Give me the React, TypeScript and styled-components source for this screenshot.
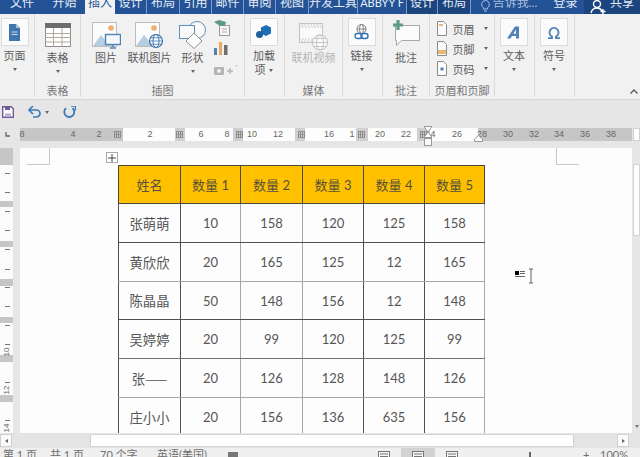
import React from 'react';
import styled, { createGlobalStyle } from 'styled-components';

const LATIN_FIRST = `Lato, 'Noto Sans CJK SC', sans-serif`;
const CJK_FIRST = `'Noto Sans CJK SC', Lato, sans-serif`;

const GlobalStyle = createGlobalStyle`
  html, body { margin: 0; padding: 0; background: #e6e6e6; }
  body { font-family: ${LATIN_FIRST}; overflow: hidden; }
`;

const Window = styled.div`
  width: 640px;
  height: 457px;
  overflow: hidden;
  display: flex;
  flex-direction: column;
  background: #e6e6e6;
`;

/* title tabs, cropped at the top in the picture */
const TabBar = styled.div`
  height: 14px;
  flex: none;
  display: flex;
  overflow: hidden;
  background: #235396;
`;

const Tab = styled.div<{ $w: number; $active?: boolean; $dark?: boolean; $sep?: boolean; $dim?: boolean; $small?: boolean }>`
  width: ${(p) => p.$w}px;
  flex: none;
  height: 14px;
  box-sizing: border-box;
  display: flex;
  justify-content: center;
  gap: 3px;
  font-size: ${(p) => (p.$small ? 11 : 12)}px;
  line-height: 14px;
  color: ${(p) => (p.$active ? '#2b579a' : p.$dim ? '#a9bfdc' : '#e8eef6')};
  background: ${(p) => (p.$active ? '#f1f1f1' : p.$dark ? '#1b457f' : 'transparent')};
  border-right: ${(p) => (p.$sep ? '1px solid #7f9cc4' : 'none')};
  & > span {
    margin-top: -4px;
    white-space: nowrap;
  }
`;

const Ribbon = styled.div`
  height: 85px;
  flex: none;
  display: flex;
  position: relative;
  background: #f1f1f1;
  border-bottom: 1px solid #d6d6d6;
`;

const Group = styled.div<{ $w: number }>`
  width: ${(p) => p.$w}px;
  height: 83px;
  flex: none;
  box-sizing: border-box;
  display: flex;
  flex-direction: column;
  border-right: 1px solid #dadada;
`;

const GroupBody = styled.div<{ $pr?: number }>`
  height: 71px;
  flex: none;
  box-sizing: border-box;
  padding-right: ${(p) => p.$pr ?? 0}px;
  display: flex;
  justify-content: center;
`;

const GroupLabel = styled.div`
  height: 12px;
  font-size: 11px;
  line-height: 12px;
  text-align: center;
  color: #777;
  white-space: nowrap;
`;

const Tool = styled.div<{ $w?: number }>`
  width: ${(p) => (p.$w ? `${p.$w}px` : 'auto')};
  flex: ${(p) => (p.$w ? 'none' : '1')};
  display: flex;
  flex-direction: column;
  align-items: center;
  padding-top: 4px;
`;

const Slot = styled.div<{ $top?: number }>`
  height: 30px;
  box-sizing: border-box;
  padding-top: ${(p) => p.$top ?? 0}px;
  display: flex;
  align-items: flex-start;
  justify-content: center;
`;

const IconBox = styled.div`
  width: 28px;
  height: 28px;
  box-sizing: border-box;
  display: flex;
  align-items: center;
  justify-content: center;
  background: #fbfbfb;
  border: 1px solid #dcdcdc;
`;

const ToolLabel = styled.div<{ $low?: boolean; $off?: boolean }>`
  margin-top: ${(p) => (p.$low ? 3 : 1)}px;
  font-size: 11px;
  line-height: 13px;
  color: ${(p) => (p.$off ? '#b4b4b4' : '#5c5c5c')};
  white-space: nowrap;
`;

const Caret = styled.i`
  display: inline-block;
  margin-top: 6px;
  width: 0;
  height: 0;
  border-left: 2.5px solid transparent;
  border-right: 2.5px solid transparent;
  border-top: 3px solid #666;
`;

const LabelCaret = styled(Caret)`
  margin: 0 0 2px 1px;
  vertical-align: middle;
`;

const MiniStack = styled.div`
  display: flex;
  flex-direction: column;
  align-items: flex-start;
  padding-top: 6px;
  gap: 6px;
  margin-left: 3px;
`;

const CameraSvg = styled.svg`
  margin-top: 4px;
`;

const ListStack = styled.div`
  display: flex;
  flex-direction: column;
  gap: 3px;
  padding-top: 6px;
`;

const ListRow = styled.div`
  height: 17px;
  display: flex;
  align-items: center;
  gap: 6px;
  font-size: 11px;
  color: #5c5c5c;
  & > i {
    margin-top: 0;
    margin-left: 3px;
  }
`;

const Collapse = styled.svg`
  position: absolute;
  right: 2px;
  bottom: 5px;
`;

const Qat = styled.div`
  height: 28px;
  flex: none;
  display: flex;
  align-items: center;
  padding: 0 0 4px 2px;
  box-sizing: border-box;
  & > i {
    margin: 0 0 0 4px;
  }
`;

const QatGap = styled.span<{ $w: number }>`
  width: ${(p) => p.$w}px;
  flex: none;
`;

const RulerRow = styled.div`
  height: 13px;
  flex: none;
  display: flex;
`;

const RulerCorner = styled.div`
  width: 20px;
  flex: none;
  display: flex;
  align-items: center;
  padding-left: 5px;
  box-sizing: border-box;
`;

const HRuler = styled.div`
  position: relative;
  width: 612px;
  display: flex;
  font-size: 9px;
  color: #666;
`;

const RulerPart = styled.div<{ $w: number; $on?: boolean; $gap?: boolean }>`
  width: ${(p) => p.$w}px;
  flex: none;
  background: ${(p) => (p.$on ? '#fdfdfd' : p.$gap ? '#cfcfcf' : '#c6c6c6')};
`;

const RulerMark = styled.span<{ $x: number }>`
  position: absolute;
  top: 0;
  left: ${(p) => p.$x - 20}px;
  width: 16px;
  margin-left: -8px;
  text-align: center;
  line-height: 13px;
  font-family: 'Liberation Sans', sans-serif;
`;

const GridMark = styled.span<{ $x: number }>`
  position: absolute;
  top: 3px;
  left: ${(p) => p.$x - 23}px;
  width: 7px;
  height: 7px;
  background: repeating-linear-gradient(90deg, #8a8a8a 0 1px, transparent 1px 2px),
    repeating-linear-gradient(0deg, #999 0 1px, transparent 1px 3px);
`;

const IndentMarker = styled.svg`
  position: absolute;
  top: -2px;
  left: 403px;
`;

const TabMarker = styled.svg`
  position: absolute;
  top: 7px;
  left: 454px;
`;

const ScrollUp = styled.div`
  width: 7px;
  flex: none;
  margin-left: 1px;
  background: #fff;
  border: 1px solid #cfcfcf;
  box-sizing: border-box;
`;

const Body = styled.div`
  height: 292px;
  flex: none;
  display: flex;
`;

const VRuler = styled.div`
  width: 13px;
  flex: none;
  margin: 7px 7px 0 0;
  position: relative;
  overflow: hidden;
  background: #fbfbfb;
`;

/* y values are window pixels, the ruler track starts at 148 */
const VBlock = styled.div<{ $y: number; $h: number }>`
  position: absolute;
  left: 0;
  right: 0;
  top: ${(p) => p.$y - 148}px;
  height: ${(p) => p.$h}px;
  background: #c6c6c6;
`;

const VTick = styled.div<{ $y: number }>`
  position: absolute;
  left: 5px;
  width: 5px;
  height: 1px;
  top: ${(p) => p.$y - 148}px;
  background: #777;
`;

const VNumber = styled.span<{ $y: number }>`
  position: absolute;
  left: 0;
  width: 13px;
  text-align: center;
  top: ${(p) => p.$y - 154}px;
  line-height: 12px;
  font-size: 8px;
  color: #666;
  font-family: 'Liberation Sans', sans-serif;
  transform: rotate(-90deg);
`;

const Page = styled.div`
  position: relative;
  width: 612px;
  flex: none;
  margin-top: 7px;
  padding: 17px 0 0 98px;
  box-sizing: border-box;
  background: #fdfdfd;
  overflow: hidden;
`;

const CropMark = styled.div<{ $side: 'left' | 'right' }>`
  position: absolute;
  top: 0;
  width: 22px;
  height: 16px;
  border-bottom: 1px solid #c8c8c8;
  ${(p) =>
    p.$side === 'left'
      ? 'left: 7px; border-right: 1px solid #c8c8c8;'
      : 'left: 536px; border-left: 1px solid #c8c8c8;'}
`;

const MoveHandle = styled.div`
  position: absolute;
  left: 86px;
  top: 4px;
  width: 12px;
  height: 11px;
  box-sizing: border-box;
  background: #fff;
  border: 1px solid #aaa;
  display: flex;
  align-items: center;
  justify-content: center;
`;

const Cursor = styled.svg`
  position: absolute;
  left: 495px;
  top: 120px;
`;

const Sheet = styled.table`
  border-collapse: collapse;
  table-layout: fixed;
`;

const HeadCell = styled.th<{ $w: number }>`
  width: ${(p) => p.$w - 1}px;
  height: 37px;
  padding: 0;
  background: #ffc000;
  border: 1px solid #4a4a3a;
  font-size: 13px;
  font-weight: 400;
  color: #57503a;
  text-align: center;
`;

const Cell = styled.td<{ $left: string; $right: string; $bottom: string; $h: number; $name?: boolean }>`
  height: ${(p) => p.$h - 1}px;
  padding: 0;
  border-left: 1px solid ${(p) => p.$left};
  border-right: 1px solid ${(p) => p.$right};
  border-bottom: 1px solid ${(p) => p.$bottom};
  font-family: ${(p) => (p.$name ? CJK_FIRST : LATIN_FIRST)};
  font-size: ${(p) => (p.$name ? 13.3 : 13)}px;
  font-weight: 400;
  color: #555;
  text-align: center;
  white-space: nowrap;
`;

const VScroll = styled.div`
  width: 8px;
  flex: none;
  position: relative;
  background: #e6e6e6;
`;

const VThumb = styled.div`
  position: absolute;
  left: 1px;
  right: 0;
  top: 23px;
  height: 72px;
  background: #fff;
  border: 1px solid #d4d4d4;
  box-sizing: border-box;
`;

const VArrow = styled.div`
  position: absolute;
  left: 3px;
  bottom: 5px;
  width: 0;
  height: 0;
  border-left: 2.5px solid transparent;
  border-right: 2.5px solid transparent;
  border-top: 3px solid #777;
`;

const HScroll = styled.div`
  height: 15px;
  flex: none;
  display: flex;
  align-items: center;
  box-sizing: border-box;
  padding: 1px 11px 1px 0;
  background: #e4e4e4;
`;

const ScrollButton = styled.div<{ $right?: boolean }>`
  width: 12px;
  height: 13px;
  flex: none;
  margin-left: ${(p) => (p.$right ? 'auto' : '0')};
  box-sizing: border-box;
  background: #fbfbfb;
  border: 1px solid #d0d0d0;
  display: flex;
  align-items: center;
  justify-content: center;
  &::after {
    content: '';
    border-top: 2.5px solid transparent;
    border-bottom: 2.5px solid transparent;
    ${(p) => (p.$right ? 'border-left: 3px solid #666;' : 'border-right: 3px solid #666;')}
  }
`;

const HThumb = styled.div`
  width: 484px;
  height: 13px;
  flex: none;
  margin-left: 78px;
  box-sizing: border-box;
  background: #fff;
  border: 1px solid #d4d4d4;
`;

const StatusBar = styled.div`
  height: 9px;
  flex: none;
  display: flex;
  overflow: hidden;
  background: #efefef;
  font-size: 11px;
  line-height: 13px;
  color: #707070;
`;

const StatusItem = styled.span<{ $w: number; $pl?: number }>`
  width: ${(p) => p.$w}px;
  flex: none;
  box-sizing: border-box;
  padding-left: ${(p) => p.$pl ?? 0}px;
  white-space: nowrap;
`;

const StatusBook = styled.i`
  display: block;
  width: 10px;
  height: 6px;
  margin-top: 4px;
  background: #777;
`;

const SliderThumb = styled.i`
  display: block;
  width: 2px;
  height: 6px;
  margin-top: 4px;
  background: #666;
`;

const ViewButton = styled.div<{ $on?: boolean; $w: number; $pr?: number }>`
  width: ${(p) => p.$w}px;
  flex: none;
  box-sizing: border-box;
  padding: 3px ${(p) => p.$pr ?? 0}px 0 0;
  display: flex;
  justify-content: center;
  background: ${(p) => (p.$on ? '#d2d2d2' : 'transparent')};
`;

const tabs = [
  { t: '文件', w: 44 },
  { t: '开始', w: 41 },
  { t: '插入', w: 30, active: true },
  { t: '设计', w: 32, sep: true },
  { t: '布局', w: 33, sep: true },
  { t: '引用', w: 32, sep: true },
  { t: '邮件', w: 32, sep: true },
  { t: '审阅', w: 32, sep: true },
  { t: '视图', w: 33, sep: true },
  { t: '开发工具', w: 49, sep: true },
  { t: 'ABBYY F', w: 49, sep: true, small: true },
  { t: '设计', w: 31, sep: true, dark: true },
  { t: '布局', w: 33, sep: true, dark: true },
];

const rulerParts = [
  { w: 103 },
  { w: 52, on: true },
  { w: 10, gap: true },
  { w: 48, on: true },
  { w: 10, gap: true },
  { w: 52, on: true },
  { w: 10, gap: true },
  { w: 51, on: true },
  { w: 12, gap: true },
  { w: 49, on: true },
  { w: 13, gap: true },
  { w: 48, on: true },
  { w: 154 },
];

const rulerNumbers: [string, number][] = [
  ['8', 22], ['4', 73], ['2', 99], ['2', 150], ['6', 201], ['8', 227], ['10', 252], ['12', 278],
  ['16', 329], ['1', 352], ['20', 380], ['22', 406], ['4', 433], ['26', 457], ['28', 482],
  ['30', 508], ['32', 534], ['34', 559], ['36', 585], ['38', 611],
];

const rulerGrids = [117, 179, 239, 301, 361, 423];

const vBlocks: [number, number][] = [
  [148, 17], [201, 6], [241, 6], [279, 7], [317, 6], [355, 7], [395, 7],
];
const vTicks = [173, 192, 211, 230, 249, 269, 287, 306, 325, 344, 382, 420];
const vNumbers: [string, number][] = [['10', 352], ['12', 390], ['14', 428]];

const colWidths = [62, 60, 62, 61, 61, 60];
const DARK_LINE = '#505050';
const SOFT_LINE = '#a6a6a6';
// vertical rules from left to right, some are faded in the picture
const colLines = [DARK_LINE, DARK_LINE, SOFT_LINE, SOFT_LINE, DARK_LINE, DARK_LINE, SOFT_LINE];
const rowLines = [DARK_LINE, SOFT_LINE, DARK_LINE, '#707070', SOFT_LINE, SOFT_LINE];
const rowHeights = [39, 39, 38, 39, 39, 39];

const rows = [
  ['张萌萌', '10', '158', '120', '125', '158'],
  ['黄欣欣', '20', '165', '125', '12', '165'],
  ['陈晶晶', '50', '148', '156', '12', '148'],
  ['吴婷婷', '20', '99', '120', '125', '99'],
  ['张——', '20', '126', '128', '148', '126'],
  ['庄小小', '20', '156', '136', '635', '156'],
];

const PageIcon = () => (
  <svg width="13" height="17" viewBox="0 0 13 17">
    <path d="M1 0h7l4 4v13H1z" fill="#3f74ad" />
    <path d="M8 0l4 4H8z" fill="#a9c3df" />
    <path d="M3.5 8h6M3.5 10.5h6" stroke="#cfe0f0" />
  </svg>
);

const TableIcon = () => (
  <svg width="26" height="24" viewBox="0 0 26 24">
    <rect x="0.5" y="0.5" width="25" height="23" fill="#fff" stroke="#8c8c8c" />
    <rect width="26" height="5" fill="#6e6e6e" />
    <path d="M0 10.5h26M0 14.5h26M0 19h26M8.5 5v19M17 5v19" stroke="#b0a89a" />
  </svg>
);

const PictureIcon = () => (
  <svg width="29" height="27" viewBox="0 0 29 27">
    <rect x="0.5" y="0.5" width="24" height="24" fill="#fbfbfb" stroke="#bdbdbd" />
    <circle cx="19" cy="6" r="2.8" fill="#f0b070" />
    <path d="M1 24l8-11 6 7 3-3 4 7z" fill="#b8cde2" />
    <rect x="13.5" y="12.5" width="15" height="10" fill="#f4f8fc" stroke="#4f82b5" strokeWidth="1.4" />
    <path d="M21 23v2M18 26h6" stroke="#4f82b5" strokeWidth="1.4" />
  </svg>
);

const OnlinePictureIcon = () => (
  <svg width="29" height="27" viewBox="0 0 29 27">
    <rect x="0.5" y="0.5" width="24" height="24" fill="#fbfbfb" stroke="#bdbdbd" />
    <circle cx="19" cy="6" r="2.8" fill="#f0b070" />
    <path d="M1 24l8-11 6 7 3-3 4 7z" fill="#b8cde2" />
    <circle cx="21" cy="19" r="6.5" fill="#fff" stroke="#3f74ad" strokeWidth="1.2" />
    <ellipse cx="21" cy="19" rx="3" ry="6.5" fill="none" stroke="#3f74ad" />
    <path d="M14.5 19h13M15.5 15.8h11M15.5 22.2h11" stroke="#3f74ad" strokeWidth="0.8" />
  </svg>
);

const ShapesIcon = () => (
  <svg width="28" height="28" viewBox="0 0 28 28">
    <circle cx="18" cy="9" r="8.5" fill="#fafafa" stroke="#5f8fbd" />
    <rect x="0.5" y="4.5" width="15" height="13" fill="#fafafa" stroke="#5f8fbd" />
    <path d="M15 12l8 8-8 7.5-8-7.5z" fill="#fcfcfc" stroke="#8e8e8e" />
  </svg>
);

const SmartArtIcon = () => (
  <svg width="16" height="16" viewBox="0 0 16 16">
    <rect x="5.5" y="5.5" width="10" height="10" fill="#f6f6f6" stroke="#9a9a9a" />
    <path d="M8 9h5M8 12h5" stroke="#aaa" />
    <path d="M0 2l5-2 7 2-1 4H6z" fill="#5f9a88" />
  </svg>
);

const ChartIcon = () => (
  <svg width="14" height="13" viewBox="0 0 14 13">
    <rect x="0" y="6" width="3" height="7" fill="#4f82b5" />
    <rect x="5" y="0" width="3" height="13" fill="#e8a860" />
    <rect x="10" y="3" width="3.5" height="10" fill="#707070" />
  </svg>
);

const CameraIcon = () => (
  <CameraSvg width="24" height="11" viewBox="0 0 24 11">
    <rect x="0" y="2" width="10" height="8" rx="1" fill="#b4b4b4" />
    <circle cx="5" cy="6" r="2" fill="#eee" />
    <path d="M13 6h6M16 3v6" stroke="#b4b4b4" strokeWidth="1.4" />
    <path d="M21 0h3l-1.5 2z" fill="#ccc" />
  </CameraSvg>
);

const AddinIcon = () => (
  <svg width="16" height="14" viewBox="0 0 16 14">
    <path d="M10 0l5 2.5v6L10 11 5 8.5v-6z" fill="#1f6fb8" />
    <circle cx="3.5" cy="9.5" r="3.5" fill="#1f5f9f" />
  </svg>
);

const VideoIcon = () => (
  <svg width="30" height="28" viewBox="0 0 30 28">
    <rect x="0.5" y="0.5" width="23" height="19" fill="#fafafa" stroke="#c4c4c4" />
    <path d="M0 4h24M0 16h24M2 2h20M2 18h20" stroke="#c8c8c8" strokeDasharray="2 1" />
    <circle cx="21" cy="19.5" r="7.5" fill="#fbfbfb" stroke="#bdbdbd" />
    <ellipse cx="21" cy="19.5" rx="3.5" ry="7.5" fill="none" stroke="#c4c4c4" />
    <path d="M13.500 19.5h15M15 15.5h12M15 23.5h12" stroke="#c4c4c4" />
  </svg>
);

const LinkIcon = () => (
  <svg width="15" height="16" viewBox="0 0 15 16">
    <circle cx="7.5" cy="5" r="4.5" fill="#fff" stroke="#777" />
    <ellipse cx="7.5" cy="5" rx="2" ry="4.5" fill="none" stroke="#888" />
    <path d="M3 5h9" stroke="#888" />
    <rect x="1" y="9.5" width="7" height="5" rx="2.5" fill="none" stroke="#2f74b5" strokeWidth="1.4" />
    <rect x="7" y="9.5" width="7" height="5" rx="2.5" fill="none" stroke="#2f74b5" strokeWidth="1.4" />
  </svg>
);

const CommentIcon = () => (
  <svg width="29" height="27" viewBox="0 0 29 27">
    <path d="M3.500 5.500h24v15h-18l-5 5v-5h-1z" fill="#fcfcfc" stroke="#a8a8a8" />
    <path d="M6 0v10M1 5h10" stroke="#5f9a88" strokeWidth="3.2" />
  </svg>
);

const SheetIcon = ({ kind }: { kind: 'head' | 'foot' | 'num' }) => (
  <svg width="10" height="15" viewBox="0 0 10 15">
    <path d="M0.5 0.5h6l3 3v11h-9z" fill="#fcfcfc" stroke="#8a8a8a" />
    {kind === 'head' && <rect x="2" y="3" width="4" height="2" fill="#e9b878" />}
    {kind === 'foot' && <rect x="1" y="9" width="8" height="4" fill="#e9b878" />}
    {kind === 'num' && <rect x="3.5" y="6.5" width="3" height="3" fill="#4f82b5" />}
  </svg>
);

const TextIcon = () => (
  <svg width="14" height="13" viewBox="0 0 14 13">
    <path d="M0 12.5L8 0.5h4v12h-3V10H5l-1.500 2.500zM6.300 7.800H9V3.500z" fill="#4f82b5" />
  </svg>
);

const SymbolIcon = () => (
  <svg width="14" height="13" viewBox="0 0 14 13">
    <path d="M1 12.200h4V10.500A4.500 4.500 0 1 1 9 10.500v1.700h4" fill="none" stroke="#4f82b5" strokeWidth="1.8" />
  </svg>
);

const SaveIcon = () => (
  <svg width="12" height="12" viewBox="0 0 12 12">
    <path d="M0.700 0.700h8.600l2 2v8.600H0.700z" fill="#fff" stroke="#6f5a9a" strokeWidth="1.4" />
    <rect x="3" y="1" width="5" height="3" fill="#6f5a9a" />
    <rect x="3" y="7.500" width="6" height="3.500" fill="#b9add2" />
  </svg>
);

const UndoIcon = () => (
  <svg width="13" height="12" viewBox="0 0 13 12">
    <path d="M1 4h7.500a3.500 3.500 0 0 1 0 7H5" fill="none" stroke="#3d7ab8" strokeWidth="1.7" />
    <path d="M5 0L1 4l4 4" fill="none" stroke="#3d7ab8" strokeWidth="1.7" />
  </svg>
);

const RedoIcon = () => (
  <svg width="13" height="13" viewBox="0 0 13 13">
    <path d="M9.500 2.200a5 5 0 1 1-6.500 0" fill="none" stroke="#3d7ab8" strokeWidth="1.8" />
    <path d="M8 0h4.500v4.500" fill="none" stroke="#3d7ab8" strokeWidth="1.5" />
  </svg>
);

const BulbIcon = () => (
  <svg width="9" height="12" viewBox="0 0 9 12">
    <path d="M4.500 0.500a4 4 0 0 1 2 7.400V9h-4V7.900a4 4 0 0 1 2-7.400zM3 11h3" fill="none" stroke="#a9bfdc" />
  </svg>
);

const ShareIcon = () => (
  <svg width="17" height="14" viewBox="0 0 17 14">
    <circle cx="7" cy="4" r="3.5" fill="none" stroke="#fff" strokeWidth="1.4" />
    <path d="M1 13c1-4 3-5 6-5s4 1 5 3M13 9v5M10.500 11.500h5" fill="none" stroke="#fff" strokeWidth="1.4" />
  </svg>
);

const ViewIcon = () => (
  <svg width="12" height="8" viewBox="0 0 12 8">
    <rect x="0.5" y="0.5" width="11" height="9" fill="#f5f5f5" stroke="#777" />
    <path d="M2 3h8M2 5.500h8" stroke="#777" />
  </svg>
);

const App = () => (
  <Window>
    <GlobalStyle />
    <TabBar>
      {tabs.map((tab, i) => (
        <Tab key={i} $w={tab.w} $active={tab.active} $sep={tab.sep} $dark={tab.dark} $small={tab.small}>
          <span>{tab.t}</span>
        </Tab>
      ))}
      <Tab $w={76} $dim>
        <BulbIcon />
        <span>告诉我...</span>
      </Tab>
      <Tab $w={37}>
        <span>登录</span>
      </Tab>
      <Tab $w={56} $dark>
        <ShareIcon />
        <span>共享</span>
      </Tab>
    </TabBar>

    <Ribbon>
      <Group $w={35}>
        <GroupBody $pr={5}>
          <Tool>
            <Slot>
              <IconBox>
                <PageIcon />
              </IconBox>
            </Slot>
            <ToolLabel>页面</ToolLabel>
            <Caret />
          </Tool>
        </GroupBody>
      </Group>
      <Group $w={46}>
        <GroupBody>
          <Tool>
            <Slot $top={5}>
              <TableIcon />
            </Slot>
            <ToolLabel $low>表格</ToolLabel>
            <Caret />
          </Tool>
        </GroupBody>
        <GroupLabel>表格</GroupLabel>
      </Group>
      <Group $w={164}>
        <GroupBody>
          <Tool $w={37}>
            <Slot $top={4}>
              <PictureIcon />
            </Slot>
            <ToolLabel $low>图片</ToolLabel>
          </Tool>
          <Tool $w={50}>
            <Slot $top={4}>
              <OnlinePictureIcon />
            </Slot>
            <ToolLabel $low>联机图片</ToolLabel>
          </Tool>
          <Tool $w={36}>
            <Slot $top={3}>
              <ShapesIcon />
            </Slot>
            <ToolLabel $low>形状</ToolLabel>
            <Caret />
          </Tool>
          <MiniStack>
            <SmartArtIcon />
            <ChartIcon />
            <CameraIcon />
          </MiniStack>
        </GroupBody>
        <GroupLabel>插图</GroupLabel>
      </Group>
      <Group $w={40}>
        <GroupBody $pr={1}>
          <Tool>
            <Slot>
              <IconBox>
                <AddinIcon />
              </IconBox>
            </Slot>
            <ToolLabel>加载</ToolLabel>
            <ToolLabel>
              项 <LabelCaret />
            </ToolLabel>
          </Tool>
        </GroupBody>
      </Group>
      <Group $w={58}>
        <GroupBody>
          <Tool>
            <Slot $top={5}>
              <VideoIcon />
            </Slot>
            <ToolLabel $low $off>
              联机视频
            </ToolLabel>
          </Tool>
        </GroupBody>
        <GroupLabel>媒体</GroupLabel>
      </Group>
      <Group $w={40}>
        <GroupBody $pr={2}>
          <Tool>
            <Slot>
              <IconBox>
                <LinkIcon />
              </IconBox>
            </Slot>
            <ToolLabel>链接</ToolLabel>
            <Caret />
          </Tool>
        </GroupBody>
      </Group>
      <Group $w={47}>
        <GroupBody>
          <Tool>
            <Slot $top={2}>
              <CommentIcon />
            </Slot>
            <ToolLabel $low>批注</ToolLabel>
          </Tool>
        </GroupBody>
        <GroupLabel>批注</GroupLabel>
      </Group>
      <Group $w={65}>
        <GroupBody>
          <ListStack>
            <ListRow>
              <SheetIcon kind="head" />
              页眉
              <Caret />
            </ListRow>
            <ListRow>
              <SheetIcon kind="foot" />
              页脚
              <Caret />
            </ListRow>
            <ListRow>
              <SheetIcon kind="num" />
              页码
              <Caret />
            </ListRow>
          </ListStack>
        </GroupBody>
        <GroupLabel>页眉和页脚</GroupLabel>
      </Group>
      <Group $w={40}>
        <GroupBody $pr={1}>
          <Tool>
            <Slot>
              <IconBox>
                <TextIcon />
              </IconBox>
            </Slot>
            <ToolLabel>文本</ToolLabel>
            <Caret />
          </Tool>
        </GroupBody>
      </Group>
      <Group $w={40}>
        <GroupBody $pr={1}>
          <Tool>
            <Slot>
              <IconBox>
                <SymbolIcon />
              </IconBox>
            </Slot>
            <ToolLabel>符号</ToolLabel>
            <Caret />
          </Tool>
        </GroupBody>
      </Group>
      <Collapse width="8" height="5" viewBox="0 0 8 5">
        <path d="M0.5 4.500L4 1l3.500 3.500" fill="none" stroke="#555" strokeWidth="1.3" />
      </Collapse>
    </Ribbon>

    <Qat>
      <SaveIcon />
      <QatGap $w={14} />
      <UndoIcon />
      <Caret />
      <QatGap $w={14} />
      <RedoIcon />
    </Qat>

    <RulerRow>
      <RulerCorner>
        <svg width="5" height="5" viewBox="0 0 5 5">
          <path d="M1 0v4h4" fill="none" stroke="#666" strokeWidth="1.3" />
        </svg>
      </RulerCorner>
      <HRuler>
        {rulerParts.map((part, i) => (
          <RulerPart key={i} $w={part.w} $on={part.on} $gap={part.gap} />
        ))}
        {rulerNumbers.map(([n, x], i) => (
          <RulerMark key={i} $x={x}>
            {n}
          </RulerMark>
        ))}
        {rulerGrids.map((x) => (
          <GridMark key={x} $x={x} />
        ))}
        <IndentMarker width="10" height="21" viewBox="0 0 10 21">
          <path d="M1 0.5h8L5 6zM5 6l4 5.500H1z" fill="#fcfcfc" stroke="#999" />
          <rect x="1.5" y="12.500" width="7" height="7" fill="#fcfcfc" stroke="#999" />
        </IndentMarker>
        <TabMarker width="9" height="7" viewBox="0 0 9 7">
          <path d="M4.500 0.500l4 3.500v2.500h-8V4z" fill="#fcfcfc" stroke="#999" />
        </TabMarker>
      </HRuler>
      <ScrollUp />
    </RulerRow>

    <Body>
      <VRuler>
        {vBlocks.map(([y, h]) => (
          <VBlock key={y} $y={y} $h={h} />
        ))}
        {vTicks.map((y) => (
          <VTick key={y} $y={y} />
        ))}
        {vNumbers.map(([n, y]) => (
          <VNumber key={n} $y={y}>
            {n}
          </VNumber>
        ))}
      </VRuler>
      <Page>
        <CropMark $side="left" />
        <CropMark $side="right" />
        <MoveHandle>
          <svg width="8" height="8" viewBox="0 0 8 8">
            <path d="M4 0v8M0 4h8" stroke="#444" />
          </svg>
        </MoveHandle>
        <Cursor width="24" height="17" viewBox="0 0 24 17">
          <rect x="0" y="3" width="4" height="4" fill="#000" />
          <path d="M5 3.500h5M5 5.500h5M0 8.500h10" stroke="#666" />
          <path d="M14 1h4M16 1v14M14 15h4" stroke="#666" fill="none" />
        </Cursor>
        <Sheet>
          <thead>
            <tr>
              {['姓名', '数量 1', '数量 2', '数量 3', '数量 4', '数量 5'].map((h, i) => (
                <HeadCell key={h} $w={colWidths[i]}>
                  {h}
                </HeadCell>
              ))}
            </tr>
          </thead>
          <tbody>
            {rows.map((row, r) => (
              <tr key={r}>
                {row.map((value, c) => (
                  <Cell
                    key={c}
                    $h={rowHeights[r]}
                    $left={colLines[c]}
                    $right={colLines[c + 1]}
                    $bottom={rowLines[r]}
                    $name={c === 0}
                  >
                    {value}
                  </Cell>
                ))}
              </tr>
            ))}
          </tbody>
        </Sheet>
      </Page>
      <VScroll>
        <VThumb />
        <VArrow />
      </VScroll>
    </Body>

    <HScroll>
      <ScrollButton />
      <HThumb />
      <ScrollButton $right />
    </HScroll>

    <StatusBar>
      <StatusItem $w={50} $pl={3}>
        第 1 页
      </StatusItem>
      <StatusItem $w={50}>共 1 页</StatusItem>
      <StatusItem $w={57}>70 个字</StatusItem>
      <StatusItem $w={71}>英语(美国)</StatusItem>
      <StatusItem $w={149}>
        <StatusBook />
      </StatusItem>
      <ViewButton $w={24} $pr={10}>
        <ViewIcon />
      </ViewButton>
      <ViewButton $w={34} $on>
        <ViewIcon />
      </ViewButton>
      <ViewButton $w={34}>
        <ViewIcon />
      </ViewButton>
      <StatusItem $w={60} />
      <StatusItem $w={54}>
        <SliderThumb />
      </StatusItem>
      <StatusItem $w={17}>+</StatusItem>
      <StatusItem $w={40}>100%</StatusItem>
    </StatusBar>
  </Window>
);

export default App;
